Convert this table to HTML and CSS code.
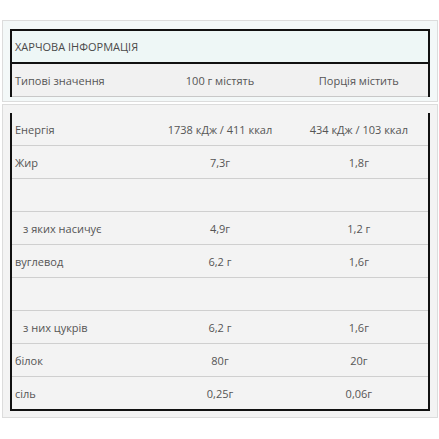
FILE: index.html
```html
<!DOCTYPE html>
<html lang="uk">
<head>
<meta charset="utf-8">
<link rel="stylesheet" href="styles.css">
</head>
<body>
<div class="panel panel-head">
  <table class="nt nt-head">
    <tr class="title-row"><td colspan="3">ХАРЧОВА ІНФОРМАЦІЯ</td></tr>
    <tr class="cols-row"><td>Типові значення</td><td>100 г містять</td><td>Порція містить</td></tr>
  </table>
</div>
<div class="panel panel-body">
  <table class="nt nt-body">
    <tr><td>Енергія</td><td>1738 кДж / 411 ккал</td><td>434 кДж / 103 ккал</td></tr>
    <tr><td>Жир</td><td>7,3г</td><td>1,8г</td></tr>
    <tr><td></td><td></td><td></td></tr>
    <tr><td class="sub">з яких насичує</td><td>4,9г</td><td>1,2 г</td></tr>
    <tr><td>вуглевод</td><td>6,2 г</td><td>1,6г</td></tr>
    <tr><td></td><td></td><td></td></tr>
    <tr><td class="sub">з них цукрів</td><td>6,2 г</td><td>1,6г</td></tr>
    <tr><td>білок</td><td>80г</td><td>20г</td></tr>
    <tr class="last"><td>сіль</td><td>0,25г</td><td>0,06г</td></tr>
  </table>
</div>
</body>
</html>
```
FILE: styles.css
```css
html, body {
  margin: 0;
  padding: 0;
  background: #ffffff;
}
body {
  padding: 20px 0 0 2px;
  font-family: "Open Sans", "Noto Sans", sans-serif;
  font-size: 11px;
  color: #555;
}
.panel {
  width: 421px;
  border: 1px solid #dcdcdc;
  padding: 8px 6px 0 7px;
}
.panel-head {
  background: #f3f8f8;
  height: 72px;
}
.panel-body {
  margin-top: 2px;
  background: #f3f3f3;
  padding-bottom: 6px;
}
.nt {
  width: 420px;
  border-collapse: collapse;
  table-layout: fixed;
}
.nt td {
  height: 32px;
  padding: 0;
  vertical-align: middle;
  text-align: center;
}
.nt td:first-child {
  text-align: left;
  padding-left: 3px;
}
.nt-head {
  border-top: 2px solid #111;
  border-left: 2px solid #111;
  border-right: 2px solid #111;
}
.title-row td {
  background: #eef7f6;
  border-bottom: 2px solid #111;
  color: #4a4a4a;
  height: 31px;
}
.cols-row td {
  background: #f1f1f1;
  border-bottom: 1px solid #c8c8c8;
}
.nt-body {
  border-left: 2px solid #111;
  border-right: 2px solid #111;
  border-bottom: 2px solid #111;
}
.nt-body tr td {
  border-bottom: 1px solid #cfcfcf;
}
.nt-body tr.last td {
  border-bottom: 2px solid #111;
}
.nt td.sub {
  padding-left: 11px;
}
```
